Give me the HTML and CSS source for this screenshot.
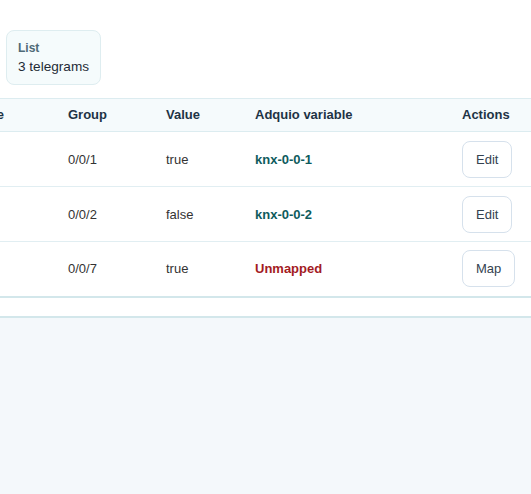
FILE: index.html
```html
<!doctype html>
<html lang="en">

<head>
    <meta charset="utf-8">
    <title>Telegrams</title>
    <meta name="viewport" content="width=device-width, initial-scale=1">
    <link rel="stylesheet" href="styles.css">
</head>

<body>
    <div class="panel">
        <div class="stats">
            <div class="stat-card">
                <span class="stat-card__label">List</span>
                <span class="stat-card__value">3 telegrams</span>
            </div>
        </div>

        <div class="table-wrap">
            <table class="telegrams">
                <colgroup>
                    <col class="col-source">
                    <col class="col-group">
                    <col class="col-value">
                    <col class="col-var">
                    <col class="col-actions">
                </colgroup>
                <thead>
                    <tr>
                        <th>Source</th>
                        <th>Group</th>
                        <th>Value</th>
                        <th>Adquio variable</th>
                        <th>Actions</th>
                    </tr>
                </thead>
                <tbody>
                    <tr>
                        <td>1.1.4</td>
                        <td>0/0/1</td>
                        <td>true</td>
                        <td><span class="var var--mapped">knx-0-0-1</span></td>
                        <td><button class="button">Edit</button></td>
                    </tr>
                    <tr>
                        <td>1.1.4</td>
                        <td>0/0/2</td>
                        <td>false</td>
                        <td><span class="var var--mapped">knx-0-0-2</span></td>
                        <td><button class="button">Edit</button></td>
                    </tr>
                    <tr>
                        <td>1.1.7</td>
                        <td>0/0/7</td>
                        <td>true</td>
                        <td><span class="var var--unmapped">Unmapped</span></td>
                        <td><button class="button">Map</button></td>
                    </tr>
                </tbody>
            </table>
        </div>
    </div>
</body>

</html>
```

FILE: styles.css
```css
* {
    box-sizing: border-box;
    margin: 0;
}

html {
    height: 100%;
}

body {
    min-height: 100%;
    background: #f4f8fb;
    font-family: "Liberation Sans", Arial, sans-serif;
    color: #333;
}

.panel {
    background: #fff;
    border-bottom: 2px solid #d3e7eb;
    padding: 30px 0 18px;
}

.stats {
    display: flex;
    padding: 0 6px;
    margin-bottom: 13px;
}

.stat-card {
    display: flex;
    flex-direction: column;
    gap: 4px;
    height: 55px;
    padding: 10px 11px;
    white-space: nowrap;
    background: #f5fbfc;
    border: 1px solid #deedf0;
    border-radius: 8px;
}

.stat-card__label {
    font-size: 12px;
    font-weight: 700;
    color: #4f6a77;
}

.stat-card__value {
    font-size: 13.6px;
    color: #1f2b36;
}

.table-wrap {
    overflow: hidden;
}

.telegrams {
    table-layout: fixed;
    width: 587px;
    margin-left: -56px;
    border-collapse: collapse;
    font-size: 13px;
    border-top: 1px solid #dcecf0;
    border-bottom: 2px solid #d3e7eb;
}

.col-source { width: 108px; }
.col-group { width: 98px; }
.col-value { width: 89px; }
.col-var { width: 207px; }
.col-actions { width: 85px; }

.telegrams th {
    height: 33px;
    padding: 0 16px 2px;
    text-align: left;
    font-weight: 700;
    color: #1e3345;
    background: #f5fafc;
    border-bottom: 1px solid #dcecf0;
}

.telegrams td {
    height: 55px;
    padding: 0 16px;
    color: #333;
    border-bottom: 1px solid #e1eef2;
}

.telegrams tbody tr:last-child td {
    border-bottom: none;
}

.var {
    font-weight: 700;
}

.var--mapped {
    color: #0e5b5d;
}

.var--unmapped {
    color: #a31b1f;
}

.button {
    height: 37px;
    padding: 0 13px;
    font-family: inherit;
    font-size: 13px;
    color: #34424f;
    background: #fff;
    border: 1px solid #d6e1ec;
    border-radius: 8px;
    cursor: pointer;
}
```
